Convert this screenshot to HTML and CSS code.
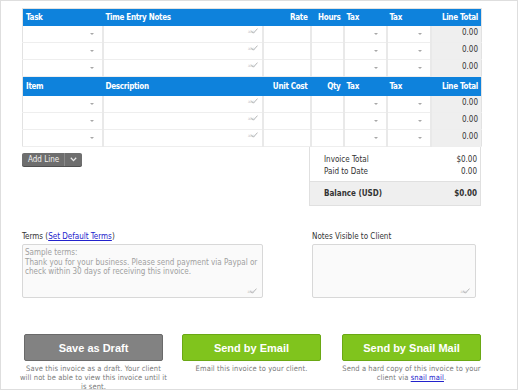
FILE: index.html
```html
<!DOCTYPE html>
<html lang="en">
  <head>
    <meta charset="UTF-8" />
    <title>Invoice Lines</title>
    <link rel="stylesheet" href="styles.css">
  </head>
  <body>
    <div class="frame">
      <table class="lines">
        <colgroup>
          <col style="width: 80px" />
          <col style="width: 160px" />
          <col style="width: 48px" />
          <col style="width: 33px" />
          <col style="width: 43px" />
          <col style="width: 44px" />
          <col style="width: 51px" />
        </colgroup>
        <tr class="head">
          <th>Task</th>
          <th>Time Entry Notes</th>
          <th class="num">Rate</th>
          <th class="num">Hours</th>
          <th>Tax</th>
          <th>Tax</th>
          <th class="num">Line Total</th>
        </tr>
        <tr>
          <td><div class="pick"><span class="caret"></span></div></td>
          <td><div class="note"><span class="spell">abc<svg width="7" height="6" viewBox="0 0 7 6"><path d="M0.5 3.2 L2.4 5.2 L6.5 0.6" fill="none" stroke="#b5b5b5" stroke-width="1"/></svg></span></div></td>
          <td></td>
          <td></td>
          <td><div class="pick"><span class="caret"></span></div></td>
          <td><div class="pick"><span class="caret"></span></div></td>
          <td class="total">0.00</td>
        </tr>
        <tr>
          <td><div class="pick"><span class="caret"></span></div></td>
          <td><div class="note"><span class="spell">abc<svg width="7" height="6" viewBox="0 0 7 6"><path d="M0.5 3.2 L2.4 5.2 L6.5 0.6" fill="none" stroke="#b5b5b5" stroke-width="1"/></svg></span></div></td>
          <td></td>
          <td></td>
          <td><div class="pick"><span class="caret"></span></div></td>
          <td><div class="pick"><span class="caret"></span></div></td>
          <td class="total">0.00</td>
        </tr>
        <tr>
          <td><div class="pick"><span class="caret"></span></div></td>
          <td><div class="note"><span class="spell">abc<svg width="7" height="6" viewBox="0 0 7 6"><path d="M0.5 3.2 L2.4 5.2 L6.5 0.6" fill="none" stroke="#b5b5b5" stroke-width="1"/></svg></span></div></td>
          <td></td>
          <td></td>
          <td><div class="pick"><span class="caret"></span></div></td>
          <td><div class="pick"><span class="caret"></span></div></td>
          <td class="total">0.00</td>
        </tr>
        <tr class="head second">
          <th>Item</th>
          <th>Description</th>
          <th class="num">Unit Cost</th>
          <th class="num">Qty</th>
          <th>Tax</th>
          <th>Tax</th>
          <th class="num">Line Total</th>
        </tr>
        <tr>
          <td><div class="pick"><span class="caret"></span></div></td>
          <td><div class="note"><span class="spell">abc<svg width="7" height="6" viewBox="0 0 7 6"><path d="M0.5 3.2 L2.4 5.2 L6.5 0.6" fill="none" stroke="#b5b5b5" stroke-width="1"/></svg></span></div></td>
          <td></td>
          <td></td>
          <td><div class="pick"><span class="caret"></span></div></td>
          <td><div class="pick"><span class="caret"></span></div></td>
          <td class="total">0.00</td>
        </tr>
        <tr>
          <td><div class="pick"><span class="caret"></span></div></td>
          <td><div class="note"><span class="spell">abc<svg width="7" height="6" viewBox="0 0 7 6"><path d="M0.5 3.2 L2.4 5.2 L6.5 0.6" fill="none" stroke="#b5b5b5" stroke-width="1"/></svg></span></div></td>
          <td></td>
          <td></td>
          <td><div class="pick"><span class="caret"></span></div></td>
          <td><div class="pick"><span class="caret"></span></div></td>
          <td class="total">0.00</td>
        </tr>
        <tr>
          <td><div class="pick"><span class="caret"></span></div></td>
          <td><div class="note"><span class="spell">abc<svg width="7" height="6" viewBox="0 0 7 6"><path d="M0.5 3.2 L2.4 5.2 L6.5 0.6" fill="none" stroke="#b5b5b5" stroke-width="1"/></svg></span></div></td>
          <td></td>
          <td></td>
          <td><div class="pick"><span class="caret"></span></div></td>
          <td><div class="pick"><span class="caret"></span></div></td>
          <td class="total">0.00</td>
        </tr>
      </table>

      <div class="under">
        <div class="add-line">
          <span class="add-label">Add Line</span>
          <span class="add-more"><svg width="7" height="5" viewBox="0 0 7 5"><path d="M0.8 0.8 L3.5 3.6 L6.2 0.8" fill="none" stroke="#e8e8e8" stroke-width="1.3"/></svg></span>
        </div>
        <div class="totals">
          <div class="sums">
            <div class="sum-row"><span>Invoice Total</span><span>$0.00</span></div>
            <div class="sum-row"><span>Paid to Date</span><span>0.00</span></div>
          </div>
          <div class="balance"><span>Balance (USD)</span><span>$0.00</span></div>
        </div>
      </div>

      <div class="notes">
        <div class="terms">
          <label>Terms (<a href="#">Set Default Terms</a>)</label>
          <div class="box">
            <p>Sample terms:<br />Thank you for your business. Please send payment via Paypal or check within 30 days of receiving this invoice.</p>
            <span class="spell corner">abc<svg width="7" height="6" viewBox="0 0 7 6"><path d="M0.5 3.2 L2.4 5.2 L6.5 0.6" fill="none" stroke="#b5b5b5" stroke-width="1"/></svg></span>
          </div>
        </div>
        <div class="client">
          <label>Notes Visible to Client</label>
          <div class="box">
            <p></p>
            <span class="spell corner">abc<svg width="7" height="6" viewBox="0 0 7 6"><path d="M0.5 3.2 L2.4 5.2 L6.5 0.6" fill="none" stroke="#b5b5b5" stroke-width="1"/></svg></span>
          </div>
        </div>
      </div>

      <div class="actions">
        <div class="action">
          <button class="btn draft">Save as Draft</button>
          <p>Save this invoice as a draft. Your client<br />will not be able to view this invoice until it<br />is sent.</p>
        </div>
        <div class="action">
          <button class="btn send">Send by Email</button>
          <p>Email this invoice to your client.</p>
        </div>
        <div class="action">
          <button class="btn send">Send by Snail Mail</button>
          <p>Send a hard copy of this invoice to your<br />client via <a href="#">snail mail</a>.</p>
        </div>
      </div>
    </div>
  </body>
</html>
```

FILE: styles.css
```css
body {
  margin: 0;
  font-family: "DejaVu Sans Condensed", "DejaVu Sans", sans-serif;
  font-size: 8px;
  color: #333;
}
.frame {
  width: 495px;
  height: 381px;
  border: 1px solid #dedede;
  padding: 7px 0 0 21px;
}
.lines {
  width: 459px;
  border-collapse: collapse;
  table-layout: fixed;
  border: 1px solid #e2e2e2;
}
.lines th {
  background: #0e82dc;
  color: #fff;
  font-weight: bold;
  letter-spacing: -0.3px;
  text-align: left;
  height: 17px;
  padding: 0 3px;
  white-space: nowrap;
}
.lines .second th {
  height: 19px;
  border-top: 1px solid #e2e2e2;
}
.lines th.num {
  text-align: right;
}
.lines td {
  height: 16px;
  padding: 0;
  border-right: 2px solid #e9e9e9;
  border-bottom: 1px solid #eeeeee;
  vertical-align: top;
}
.lines td:last-child {
  border-right: none;
}
.lines td.total {
  background: #efefef;
  text-align: right;
  padding: 0 3px 0 0;
  line-height: 13px;
  color: #333;
}
.pick {
  height: 16px;
  display: flex;
  align-items: center;
  justify-content: flex-end;
  padding-right: 8px;
}
.caret {
  width: 0;
  height: 0;
  border-left: 2px solid transparent;
  border-right: 2px solid transparent;
  border-top: 2px solid #a8a8a8;
}
.note {
  height: 16px;
  display: flex;
  justify-content: flex-end;
  padding: 1px 4px 0 0;
  box-sizing: border-box;
}
.spell {
  display: flex;
  align-items: flex-end;
  font-size: 4px;
  line-height: 4px;
  color: #c4c4c4;
  height: 7px;
}
.spell svg {
  margin-left: -4px;
}

.under {
  display: flex;
  justify-content: space-between;
  width: 459px;
}
.add-line {
  margin-top: 6px;
  height: 13px;
  display: flex;
  background: #6e6e6e;
  border-radius: 2px;
  color: #f2f2f2;
  font-size: 8px;
  line-height: 13px;
  box-shadow: 0 1px 0 #505050;
}
.add-label {
  padding: 0 5px 0 6px;
  border-right: 1px solid #8a8a8a;
}
.add-more {
  width: 17px;
  display: flex;
  align-items: center;
  justify-content: center;
}
.totals {
  width: 170px;
  border: 1px solid #e0e0e0;
  border-top: none;
}
.sums {
  padding: 7px 3px 3px 14px;
  border-bottom: 1px solid #e0e0e0;
}
.sum-row {
  display: flex;
  justify-content: space-between;
  line-height: 12px;
}
.balance {
  background: #efefef;
  display: flex;
  justify-content: space-between;
  padding: 0 3px 0 14px;
  height: 23px;
  align-items: center;
  font-weight: bold;
}

.notes {
  display: flex;
  margin-top: 26px;
}
.notes label {
  display: block;
  line-height: 10px;
  color: #333;
  margin-bottom: 2px;
}
.notes a {
  color: #2222cc;
  text-decoration: underline;
}
.terms {
  width: 241px;
}
.client {
  width: 164px;
  margin-left: 49px;
}
.box {
  height: 52px;
  border: 1px solid #d8d8d8;
  border-radius: 2px;
  background: #fafafa;
  display: flex;
  flex-direction: column;
  justify-content: space-between;
}
.box p {
  margin: 0;
  padding: 3px 3px 0 2px;
  color: #a0a0a0;
  line-height: 9.5px;
}
.spell.corner {
  align-self: flex-end;
  margin: 0 5px 3px 0;
}

.actions {
  display: flex;
  margin-top: 36px;
  margin-left: 2px;
}
.action {
  width: 139px;
  margin-right: 19px;
  text-align: center;
}
.action:last-child {
  margin-right: 0;
  margin-left: 2px;
}
.btn {
  display: block;
  width: 139px;
  height: 27px;
  border: 1px solid #6a6a6a;
  border-radius: 2px;
  color: #fff;
  font-family: "Liberation Sans", Arial, sans-serif;
  font-weight: bold;
  font-size: 11px;
  padding: 0;
}
.btn.draft {
  background: #828282;
}
.btn.send {
  background: #80c41d;
  border-color: #6aa814;
}
.action p {
  margin: 4px -6px 0;
  font-size: 7.5px;
  letter-spacing: 0.1px;
  line-height: 8.8px;
  white-space: nowrap;
  color: #7a7a7a;
}
.action a {
  color: #2222cc;
}
```
